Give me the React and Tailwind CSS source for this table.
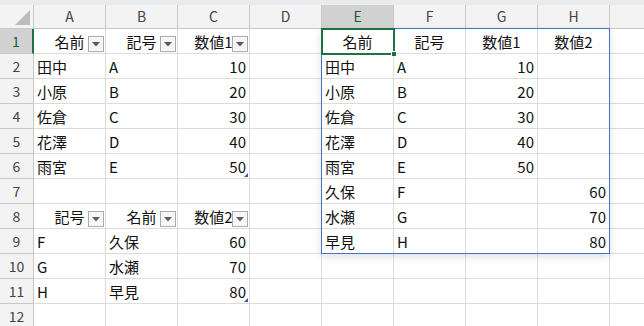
import React from "react";

const COLS = ["A", "B", "C", "D", "E", "F", "G", "H", ""];

// cell: { t: text, a: "l" | "r" | "c", f: filter button, m: table corner marker }
const S = (t) => ({ t, a: "l" });
const N = (t) => ({ t, a: "r" });
const H = (t) => ({ t, a: "c" });
const F = (t) => ({ t, a: "c", f: true });

const rows = [
  [F("名前"), F("記号"), F("数値1"), null, H("名前"), H("記号"), H("数値1"), H("数値2")],
  [S("田中"), S("A"), N("10"), null, S("田中"), S("A"), N("10"), null],
  [S("小原"), S("B"), N("20"), null, S("小原"), S("B"), N("20"), null],
  [S("佐倉"), S("C"), N("30"), null, S("佐倉"), S("C"), N("30"), null],
  [S("花澤"), S("D"), N("40"), null, S("花澤"), S("D"), N("40"), null],
  [S("雨宮"), S("E"), { ...N("50"), m: true }, null, S("雨宮"), S("E"), N("50"), null],
  [null, null, null, null, S("久保"), S("F"), null, N("60")],
  [F("記号"), F("名前"), F("数値2"), null, S("水瀬"), S("G"), null, N("70")],
  [S("F"), S("久保"), N("60"), null, S("早見"), S("H"), null, N("80")],
  [S("G"), S("水瀬"), N("70"), null, null, null, null, null],
  [S("H"), S("早見"), { ...N("80"), m: true }, null, null, null, null, null],
  [null, null, null, null, null, null, null, null],
];

function FilterButton() {
  return (
    <div className="absolute right-[1px] bottom-[1px] w-4 h-4 bg-[#f7f7f7] border border-[#ababab] flex items-center justify-center">
      <svg width="8" height="5" viewBox="0 0 8 5">
        <path d="M0 0 H8 L4 4.5 Z" fill="#5a5a5a" />
      </svg>
    </div>
  );
}

function Cell({ cell }) {
  const align =
    cell?.a === "r" ? "justify-end pr-[3px]" : cell?.a === "c" ? "justify-center" : "justify-start pl-[3px]";
  return (
    <div
      className={`relative h-[25px] border-r border-b border-[#dcdcdc] bg-white flex items-center ${align} text-[15px] leading-none text-[#111] whitespace-nowrap overflow-visible`}
    >
      {cell && <span className="relative z-0">{cell.t}</span>}
      {cell?.f && <FilterButton />}
      {cell?.m && (
        <svg className="absolute right-[1px] bottom-[1px]" width="4" height="4" viewBox="0 0 4 4">
          <path d="M4 0 V4 H0 Z" fill="#3f51b5" />
        </svg>
      )}
    </div>
  );
}

export default function App() {
  return (
    <div
      className="w-[644px] h-[326px] overflow-hidden bg-white"
      style={{ fontFamily: '"Noto Sans CJK JP", "Noto Sans", sans-serif' }}
    >
      <div className="h-[5px] bg-[#e9ecef]" />
      <div className="relative grid grid-cols-[34px_repeat(9,72px)]">
        {/* corner */}
        <div className="relative h-[24px] bg-[#f3f3f3] border-r border-b border-[#c8c8c8]">
          <svg className="absolute right-[3px] bottom-[3px]" width="15" height="15" viewBox="0 0 15 15">
            <path d="M15 0 V15 H0 Z" fill="#bdbdbd" />
          </svg>
        </div>
        {COLS.map((c, k) => (
          <div
            key={k}
            className={`h-[24px] border-r border-b flex items-center justify-center text-[14px] ${
              c === "E"
                ? "bg-[#d2d2d2] text-[#185c37] border-r-[#c8c8c8] border-b-[#1e7145]"
                : "bg-[#f3f3f3] text-[#444] border-[#c8c8c8]"
            }`}
          >
            {c}
          </div>
        ))}

        {rows.map((r, i) => (
          <React.Fragment key={i}>
            <div
              className={`h-[25px] border-b flex items-center justify-center text-[14px] ${
                i === 0
                  ? "bg-[#d2d2d2] text-[#185c37] border-r-2 border-r-[#1e7145] border-b-[#c8c8c8]"
                  : "bg-[#f3f3f3] text-[#444] border-r border-[#c8c8c8]"
              }`}
            >
              {i + 1}
            </div>
            {r.map((cell, j) => (
              <Cell key={j} cell={cell} />
            ))}
            <Cell cell={null} />
          </React.Fragment>
        ))}

        {/* spill range outline E1:H9 */}
        <div className="pointer-events-none absolute left-[321px] top-[23px] w-[289px] h-[226px] border border-[#4472c4] shadow-[0_3px_8px_rgba(0,0,0,0.12)]" />
        {/* active cell E1 */}
        <div className="pointer-events-none absolute left-[321px] top-[23px] w-[74px] h-[27px] border-2 border-[#1e7145]">
          <div className="absolute -right-[4px] -bottom-[4px] w-[6px] h-[6px] bg-[#1e7145] border border-white" />
        </div>
      </div>
    </div>
  );
}
